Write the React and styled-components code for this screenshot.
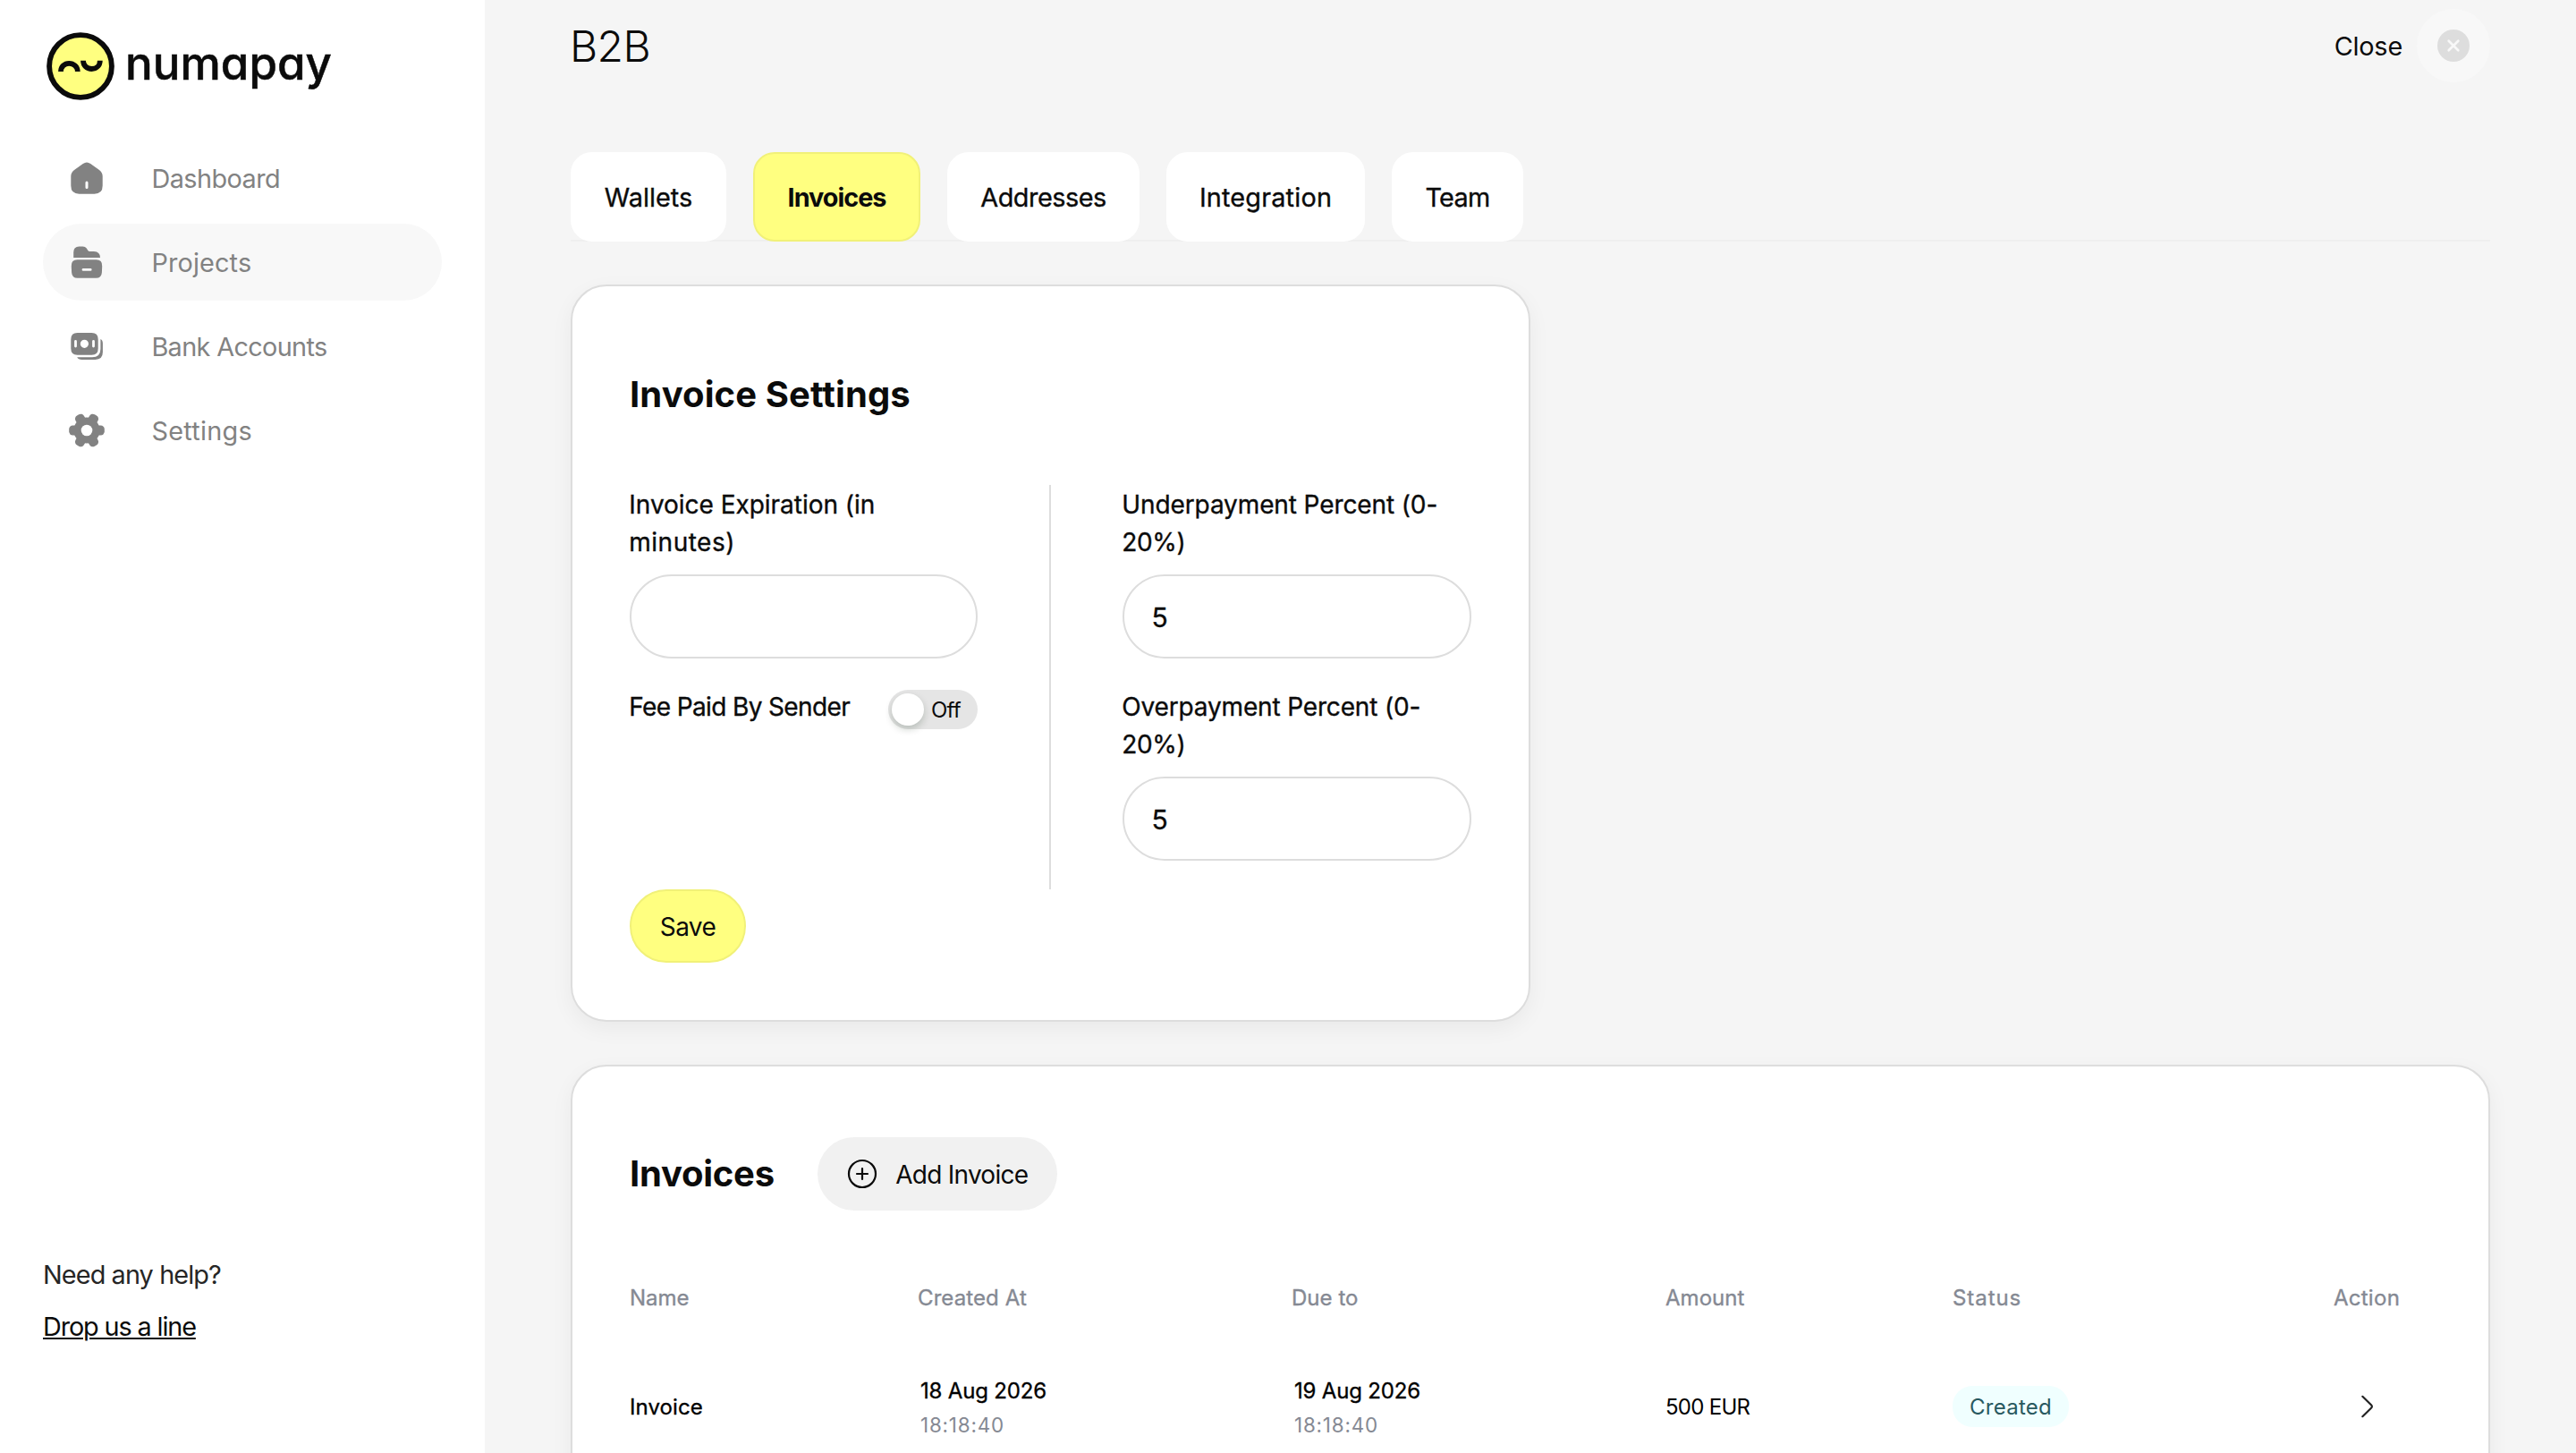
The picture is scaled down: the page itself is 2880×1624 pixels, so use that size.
import React from 'react';
import styled, { createGlobalStyle } from 'styled-components';

const GlobalStyle = createGlobalStyle`
  *, *::before, *::after { box-sizing: border-box; }
  body {
    margin: 0;
    background: #f5f5f5;
    font-family: "Inter", "Liberation Sans", sans-serif;
    color: #0b0b0b;
    overflow: hidden;
  }
`;

const Layout = styled.div`
  display: flex;
  width: 100%;
  height: 1624px;
  overflow: hidden;
`;

const Text = styled.span`
  font-size: ${(p) => p.$size || 28.8}px;
  font-weight: ${(p) => p.$weight || 400};
  letter-spacing: ${(p) => p.$track || 0}px;
  color: ${(p) => p.$color || 'inherit'};
  white-space: pre;
`;

/* Sits between the regular and medium weights. */
const MediumText = styled(Text)`
  -webkit-text-stroke: 0.35px currentColor;
`;

/* Sidebar */

const Sidebar = styled.aside`
  display: flex;
  flex-direction: column;
  flex: none;
  width: 542px;
  padding: 36px 48px 112px;
  background: #fff;
`;

const Brand = styled.div`
  display: flex;
  align-items: flex-start;
  gap: 12px;
  height: 120px;
  padding-left: 4px;
`;

const Wordmark = styled.span`
  font-size: 51px;
  font-weight: 500;
  line-height: 70px;
  letter-spacing: 0.05px;
  font-feature-settings: "cv11" 1;
  -webkit-text-stroke: 0.5px currentColor;
`;

const Nav = styled.nav`
  display: flex;
  flex-direction: column;
  gap: 8px;
`;

const NavItem = styled.a`
  display: flex;
  align-items: center;
  gap: 52.4px;
  height: 86px;
  padding-left: 29px;
  border-radius: 43px;
  background: ${(p) => (p.$active ? '#f8f8f8' : 'transparent')};
  color: #828282;
`;

const Help = styled.div`
  display: flex;
  flex-direction: column;
  align-items: flex-start;
  margin-top: auto;
  line-height: 58px;
`;

const HelpLink = styled(Text)`
  text-decoration: underline;
  text-decoration-thickness: 2px;
  text-underline-offset: 2px;
`;

/* Main */

const Main = styled.main`
  flex: 1;
  min-width: 0;
  padding: 0 96px;
`;

const Header = styled.header`
  display: flex;
  align-items: center;
  justify-content: space-between;
  height: 102px;
  margin-left: -1px;
`;

const CloseGroup = styled.div`
  display: flex;
  align-items: center;
  gap: 16px;
`;

const CloseButton = styled.button`
  display: flex;
  align-items: center;
  justify-content: center;
  width: 82px;
  height: 82px;
  padding: 0;
  border: 0;
  border-radius: 50%;
  background: #f8f8f8;
`;

const Tabs = styled.div`
  display: flex;
  gap: 30px;
  margin-top: 68px;
  box-shadow: inset 0 -2px 0 #efefef;
`;

const Tab = styled.div`
  display: flex;
  align-items: center;
  justify-content: center;
  width: ${(p) => p.$width}px;
  height: 100px;
  padding-top: 1px;
  border: 2px solid ${(p) => (p.$active ? '#f1f178' : '#fff')};
  border-radius: 24px;
  background: ${(p) => (p.$active ? '#ffff80' : '#fff')};
`;

const Card = styled.section`
  width: ${(p) => p.$width};
  height: ${(p) => p.$height}px;
  margin-top: 48px;
  padding: ${(p) => p.$top}px 64px 0;
  border: 2px solid #dddddd;
  border-radius: 40px;
  background: #fff;
  box-shadow: 0 8px 24px rgba(0, 0, 0, 0.05);
`;

const CardTitle = styled.h2`
  margin: 0;
  font-size: 40px;
  font-weight: 700;
  line-height: 62px;
  letter-spacing: ${(p) => p.$track}px;
`;

const Columns = styled.div`
  display: grid;
  grid-template-columns: 389px 2px 390px;
  column-gap: 80px;
  height: 452px;
  margin-top: 70px;
`;

const Divider = styled.div`
  background: #dddddd;
`;

const Field = styled.label`
  display: flex;
  flex-direction: column;
  padding: 1px 0 32px;
`;

const LabelLine = styled(MediumText)`
  margin-left: -0.7px;
  line-height: 42px;
`;

const Input = styled.div`
  display: flex;
  align-items: center;
  height: 94px;
  margin-top: 15px;
  padding: 2px 0 0 30.5px;
  border: 2px solid #dddddd;
  border-radius: 47px;
`;

const SwitchRow = styled.div`
  display: flex;
  align-items: flex-start;
  justify-content: space-between;
  padding-top: 1px;
`;

const Switch = styled.div`
  display: flex;
  align-items: center;
  gap: 8px;
  width: 100px;
  height: 44px;
  margin-top: 2px;
  padding-left: 4px;
  border-radius: 22px;
  background: #e5e5e5;
`;

const Knob = styled.span`
  width: 36px;
  height: 36px;
  border-radius: 50%;
  background: #fff;
  box-shadow: 0 4px 8px rgba(0, 35, 11, 0.2);
`;

const SaveButton = styled.button`
  display: flex;
  align-items: center;
  justify-content: center;
  width: 130px;
  height: 82px;
  padding: 1px 0 0;
  border: 2px solid #f1f178;
  border-radius: 41px;
  background: #ffff80;
  color: inherit;
  font-family: inherit;
`;

const TitleRow = styled.div`
  display: flex;
  align-items: center;
  gap: 48px;
`;

const AddButton = styled.button`
  display: flex;
  align-items: center;
  gap: 19.5px;
  width: 268px;
  height: 82px;
  padding: 0 0 0 32px;
  border: 0;
  border-radius: 41px;
  background: #f1f1f1;
  color: inherit;
  font-family: inherit;
  line-height: 36px;
`;

const AddLabel = styled(Text)`
  padding-top: 2px;
`;

const Row = styled.div`
  display: grid;
  grid-template-columns: 322px 418px 418px 321px 391px 144px;
  align-items: center;
  height: ${(p) => p.$height}px;
  margin-top: ${(p) => p.$gap || 0}px;
`;

const Cell = styled.div`
  display: flex;
  justify-content: ${(p) => (p.$center ? 'center' : 'flex-start')};
`;

const DateCell = styled.div`
  display: flex;
  flex-direction: column;
  padding: 3px 0 0 3px;
  line-height: 38px;
`;

const Badge = styled.span`
  display: flex;
  align-items: center;
  justify-content: center;
  width: 130px;
  height: 46px;
  border-radius: 22px;
  background: #f0ffff;
`;

/* Icons */

const LogoMark = () => (
  <svg width="76" height="76" viewBox="0 0 76 76" fill="none">
    <circle cx="38" cy="38" r="34.9" fill="#ffff80" stroke="#0b0b0b" strokeWidth="5.9" />
    <path d="M16 44c0-5.3 4-9.2 9.2-9.2S34.8 38.7 34.8 44" stroke="#0b0b0b" strokeWidth="5.8" />
    <path d="M41 31.7c0 5.3 4 9.3 9.5 9.3S59.8 37 59.8 31.7" stroke="#0b0b0b" strokeWidth="5.8" />
  </svg>
);

const HomeIcon = () => (
  <svg width="40" height="40" viewBox="0 0 40 40" fill="currentColor">
    <path
      fillRule="evenodd"
      d="M15.8 3.9Q20 .9 24.2 3.9L34 11.1Q37.7 14 37.7 18V28.500Q37.7 37.7 28.5 37.7H11.5Q2.3 37.7 2.3 28.5V18Q2.3 14 6 11.1ZM20 23.600a1.5 1.500 0 0 0-1.5 1.500v5.400a1.500 1.500 0 0 0 3 0v-5.400A1.500 1.500 0 0 0 20 23.600Z"
    />
  </svg>
);

const FolderIcon = () => (
  <svg width="40" height="40" viewBox="0 0 40 40" fill="currentColor">
    <path d="M5.200 14.900V9Q5.200 2.400 11.500 2.400H15.500Q18.300 2.400 19.800 4.600L21.300 7Q22 8.100 23.400 8.100H28Q35 8.600 35 14.900Z" />
    <path
      fillRule="evenodd"
      d="M9.500 17.300H30.500Q37.500 17.300 37.200 24.500L36.900 31.500Q36.500 37.800 30.300 37.800H9.700Q3.500 37.800 3.100 31.500L2.800 24.500Q2.500 17.300 9.500 17.300ZM16 27a1.400 1.400 0 0 0 0 2.800h8.200a1.400 1.400 0 0 0 0-2.800Z"
    />
  </svg>
);

const BanknotesIcon = () => (
  <svg width="40" height="40" viewBox="0 0 40 40" fill="currentColor">
    <path
      fillRule="evenodd"
      d="M9.500 5H25.500Q32.700 5 32.700 12.200V22.500Q32.700 29.700 25.500 29.700H9.500Q2.300 29.700 2.300 22.500V12.200Q2.300 5 9.500 5ZM17.400 12.700a4.600 4.600 0 1 0 0 9.200a4.600 4.600 0 0 0 0-9.200ZM7.500 13.100a1.400 1.400 0 0 0-1.400 1.400v5.600a1.400 1.400 0 0 0 2.800 0v-5.600A1.400 1.400 0 0 0 7.500 13.100ZM27.500 13.100a1.400 1.400 0 0 0-1.400 1.400v5.600a1.400 1.400 0 0 0 2.800 0v-5.600A1.400 1.400 0 0 0 27.500 13.100Z"
    />
    <path d="M35.400 12.100Q37.900 13.300 37.900 17V26.500Q37.900 34.900 29.500 34.900H14.500Q10.500 34.900 9.200 32.300H26Q35.400 32.300 35.400 23Z" />
  </svg>
);

const GearIcon = () => (
  <svg width="40" height="40" viewBox="0 0 40 40" fill="currentColor">
    <mask id="gear-hole">
      <rect width="40" height="40" fill="#fff" />
      <circle cx="20" cy="20" r="6.300" fill="#000" />
    </mask>
    <g mask="url(#gear-hole)">
      <circle cx="20" cy="20" r="14.600" />
      {[0, 60, 120].map((angle) => (
        <rect key={angle} x="0.200" y="14.600" width="39.600" height="10.800" rx="4.200" transform={`rotate(${angle} 20 20)`} />
      ))}
    </g>
  </svg>
);

const CloseIcon = () => (
  <svg width="36" height="36" viewBox="0 0 36 36" fill="none">
    <circle cx="18" cy="18" r="18" fill="#dddddd" />
    <path d="M12.700 12.700l10.600 10.600M23.300 12.700L12.700 23.300" stroke="#f8f8f8" strokeWidth="2.700" strokeLinecap="round" />
  </svg>
);

const PlusCircleIcon = () => (
  <svg width="36" height="36" viewBox="0 0 36 36" fill="none" stroke="#0b0b0b" strokeWidth="2.200" strokeLinecap="round">
    <circle cx="18" cy="18" r="15" />
    <path d="M12 18h12M18 12v12" />
  </svg>
);

const ChevronIcon = () => (
  <svg width="24" height="32" viewBox="0 0 24 32" fill="none">
    <path d="M7.300 4.800L17 14.300Q18.800 16 17 17.700L7.300 27.200" stroke="#222" strokeWidth="2.200" strokeLinecap="round" />
  </svg>
);

const NAV = [
  { label: 'Dashboard', track: -0.54, Icon: HomeIcon },
  { label: 'Projects', track: 0.16, Icon: FolderIcon, active: true },
  { label: 'Bank Accounts', track: -0.63, Icon: BanknotesIcon },
  { label: 'Settings', track: 0.28, Icon: GearIcon },
];

const TABS = [
  { label: 'Wallets', width: 174, track: 0.04 },
  { label: 'Invoices', width: 187, track: -1.02, active: true },
  { label: 'Addresses', width: 215, track: -0.48 },
  { label: 'Integration', width: 222, track: 0.2 },
  { label: 'Team', width: 147, track: -0.7 },
];

const HEADINGS = [
  { label: 'Name', track: 0 },
  { label: 'Created At', track: 0.1 },
  { label: 'Due to', track: 0.05 },
  { label: 'Amount', track: 0.05 },
  { label: 'Status', track: 0.94 },
  { label: 'Action', track: 0.28, center: true },
];

const GREY = '#858993';

const Timestamp = ({ date, time }) => (
  <DateCell>
    <MediumText $size={24} $track={-0.18} $color="#000">{date}</MediumText>
    <Text $size={22.4} $track={0.82} $color={GREY}>{time}</Text>
  </DateCell>
);

export default function App() {
  return (
    <Layout>
      <GlobalStyle />
      <Sidebar>
        <Brand>
          <LogoMark />
          <Wordmark>numapay</Wordmark>
        </Brand>
        <Nav>
          {NAV.map(({ label, track, Icon, active }) => (
            <NavItem key={label} $active={active}>
              <Icon />
              <Text $track={track}>{label}</Text>
            </NavItem>
          ))}
        </Nav>
        <Help>
          <Text $track={-0.88} $color="#262626">Need any help?</Text>
          <HelpLink $track={-1.12}>Drop us a line</HelpLink>
        </Help>
      </Sidebar>

      <Main>
        <Header>
          <Text $size={48} $weight={300} $track={-0.57}>B2B</Text>
          <CloseGroup>
            <Text $track={-0.18}>Close</Text>
            <CloseButton aria-label="Close">
              <CloseIcon />
            </CloseButton>
          </CloseGroup>
        </Header>

        <Tabs>
          {TABS.map(({ label, width, track, active }) => (
            <Tab key={label} $width={width} $active={active}>
              {active ? (
                <Text $weight={700} $track={track}>{label}</Text>
              ) : (
                <MediumText $track={track}>{label}</MediumText>
              )}
            </Tab>
          ))}
        </Tabs>

        <Card $width="1073px" $height={824} $top={90}>
          <CardTitle $track={0.1}>Invoice Settings</CardTitle>
          <Columns>
            <div>
              <Field>
                <LabelLine $size={28} $track={-0.03}>Invoice Expiration (in</LabelLine>
                <LabelLine $size={28} $track={0.5}>minutes)</LabelLine>
                <Input />
              </Field>
              <SwitchRow>
                <LabelLine $size={28} $track={-0.63}>Fee Paid By Sender</LabelLine>
                <Switch>
                  <Knob />
                  <Text $size={24} $track={-0.8}>Off</Text>
                </Switch>
              </SwitchRow>
            </div>
            <Divider />
            <div>
              <Field>
                <LabelLine $size={28} $track={-0.11}>Underpayment Percent (0-</LabelLine>
                <LabelLine $size={28} $track={-0.35}>20%)</LabelLine>
                <Input>
                  <MediumText $size={30}>5</MediumText>
                </Input>
              </Field>
              <Field>
                <LabelLine $size={28} $track={-0.16}>Overpayment Percent (0-</LabelLine>
                <LabelLine $size={28} $track={-0.35}>20%)</LabelLine>
                <Input>
                  <MediumText $size={30}>5</MediumText>
                </Input>
              </Field>
            </div>
          </Columns>
          <SaveButton>
            <Text $size={28} $track={-0.6}>Save</Text>
          </SaveButton>
        </Card>

        <Card $width="100%" $height={520} $top={79}>
          <TitleRow>
            <CardTitle $track={-0.26}>Invoices</CardTitle>
            <AddButton>
              <PlusCircleIcon />
              <AddLabel $size={28} $track={-0.75}>Add Invoice</AddLabel>
            </AddButton>
          </TitleRow>
          <Row $height={98} $gap={48}>
            {HEADINGS.map(({ label, track, center }) => (
              <Cell key={label} $center={center}>
                <MediumText $size={24} $track={track} $color={GREY}>{label}</MediumText>
              </Cell>
            ))}
          </Row>
          <Row $height={146}>
            <Cell>
              <MediumText $size={24} $track={0.08} $color="#000">Invoice</MediumText>
            </Cell>
            <Timestamp date="18 Aug 2026" time="18:18:40" />
            <Timestamp date="19 Aug 2026" time="18:18:40" />
            <Cell>
              <Text $size={24} $track={-0.72} $color="#000">500 EUR</Text>
            </Cell>
            <Badge>
              <Text $size={24} $track={0.25} $color="#28595f">Created</Text>
            </Badge>
            <Cell $center>
              <ChevronIcon />
            </Cell>
          </Row>
        </Card>
      </Main>
    </Layout>
  );
}
